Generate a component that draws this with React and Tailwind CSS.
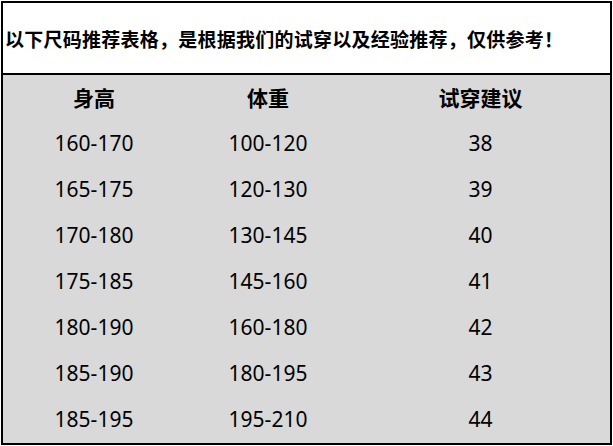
import React from 'react';

const rows = [
  ['160-170', '100-120', '38'],
  ['165-175', '120-130', '39'],
  ['170-180', '130-145', '40'],
  ['175-185', '145-160', '41'],
  ['180-190', '160-180', '42'],
  ['185-190', '180-195', '43'],
  ['185-195', '195-210', '44'],
];

const cjk = { fontFamily: '"Noto Sans CJK SC", "Noto Sans", sans-serif' };
const num = { fontFamily: '"Noto Sans", "Noto Sans CJK SC", sans-serif' };

const App = () => {
  return (
    <div className="w-[613px] h-[446px] bg-white pl-px pt-px">
      <div className="w-[611px] h-[444px] border-2 border-black flex flex-col">
        {/* Title */}
        <div className="h-[72px] border-b-2 border-black flex items-center pl-[2px] pt-[1px]">
          <span className="text-[19px] font-bold text-black leading-none tracking-[0.25px]" style={cjk}>
            以下尺码推荐表格，是根据我们的试穿以及经验推荐，仅供参考！
          </span>
        </div>

        {/* Table */}
        <div className="flex-1 bg-[#d9d9d9]">
          <div className="grid grid-cols-[182px_166px_1fr] h-[46px] items-center text-center text-[21px] font-bold text-black" style={cjk}>
            <span>身高</span>
            <span>体重</span>
            <span>试穿建议</span>
          </div>
          {rows.map((r) => (
            <div
              key={r[0] + r[1]}
              className="grid grid-cols-[182px_166px_1fr] h-[46px] items-center text-center text-[21px] text-black"
              style={num}
            >
              <span>{r[0]}</span>
              <span>{r[1]}</span>
              <span>{r[2]}</span>
            </div>
          ))}
        </div>
      </div>
    </div>
  );
};

export default App;
